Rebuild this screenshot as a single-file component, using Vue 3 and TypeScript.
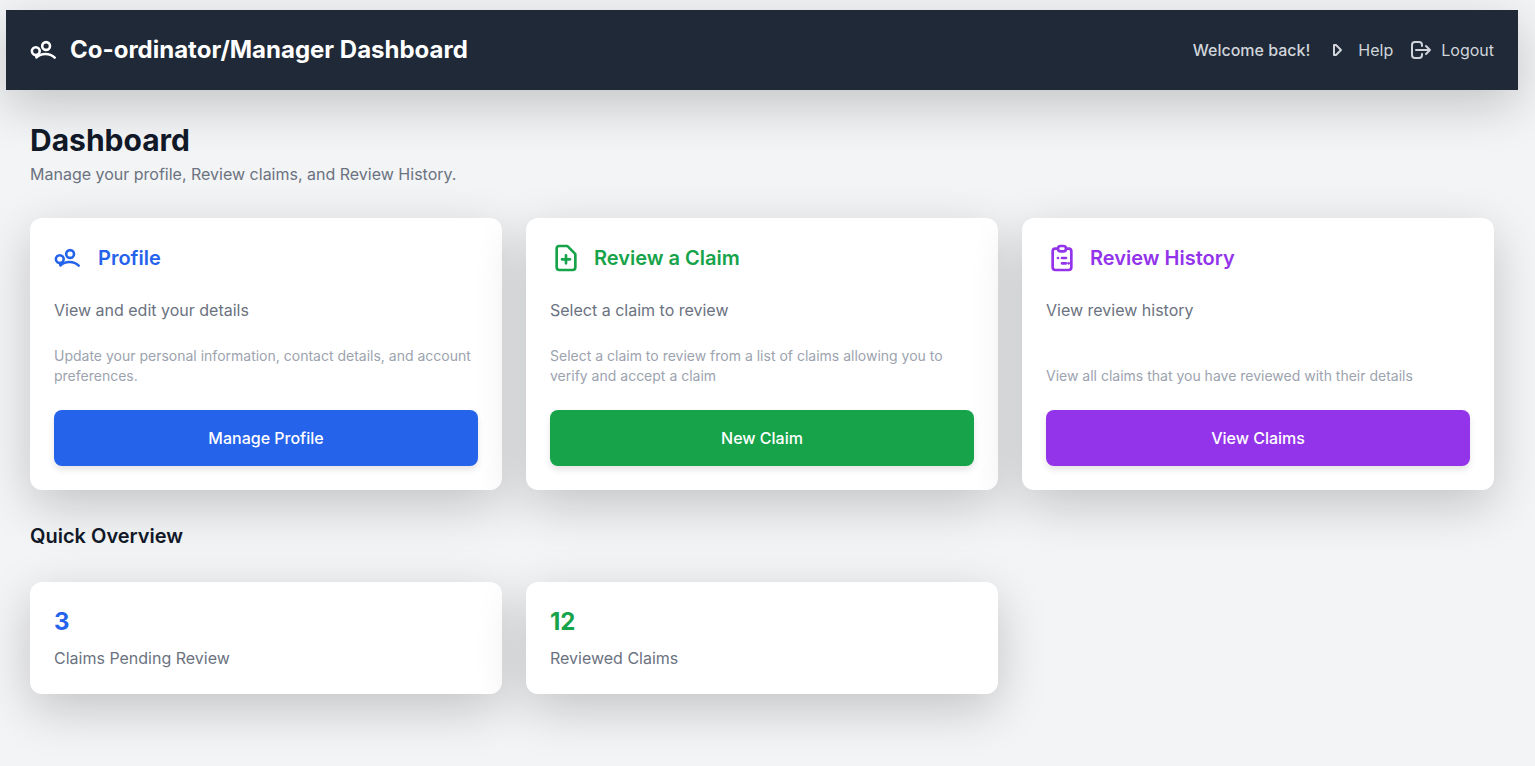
<script setup lang="ts">
interface Card {
  tone: string
  icon: 'people' | 'file' | 'clipboard'
  title: string
  summary: string
  details: string
  action: string
}

interface Stat {
  tone: string
  value: number
  label: string
}

const cards: Card[] = [
  {
    tone: 'blue',
    icon: 'people',
    title: 'Profile',
    summary: 'View and edit your details',
    details: 'Update your personal information, contact details, and account preferences.',
    action: 'Manage Profile',
  },
  {
    tone: 'green',
    icon: 'file',
    title: 'Review a Claim',
    summary: 'Select a claim to review',
    details: 'Select a claim to review from a list of claims allowing you to verify and accept a claim',
    action: 'New Claim',
  },
  {
    tone: 'purple',
    icon: 'clipboard',
    title: 'Review History',
    summary: 'View review history',
    details: 'View all claims that you have reviewed with their details',
    action: 'View Claims',
  },
]

const stats: Stat[] = [
  { tone: 'blue', value: 3, label: 'Claims Pending Review' },
  { tone: 'green', value: 12, label: 'Reviewed Claims' },
]
</script>

<template>
  <div class="page">
    <header class="topbar">
      <div class="brand">
        <svg class="icon people" viewBox="0 0 32 32" aria-hidden="true">
          <circle cx="16.1" cy="12" r="3.9" />
          <circle cx="5.8" cy="17.100" r="3.9" />
          <path d="M6.500 23.400C11 18.900 19.500 18.700 24.700 23.600M6.500 23.400L6 21" />
        </svg>
        <h1>Co-ordinator/Manager Dashboard</h1>
      </div>
      <nav class="links">
        <span class="welcome">Welcome back!</span>
        <a href="#help">
          <svg class="icon small" viewBox="0 0 24 24" aria-hidden="true">
            <path d="M8 7h2L15 12l-5 5H8z" />
          </svg>
          Help
        </a>
        <a href="#logout">
          <svg class="icon small" viewBox="0 0 24 24" aria-hidden="true">
            <path d="M17 16l4-4m0 0l-4-4m4 4H7m6 4v1a3 3 0 01-3 3H6a3 3 0 01-3-3V7a3 3 0 013-3h4a3 3 0 013 3v1" />
          </svg>
          Logout
        </a>
      </nav>
    </header>

    <main>
      <h2 class="heading">Dashboard</h2>
      <p class="lead">Manage your profile, Review claims, and Review History.</p>

      <section class="grid">
        <article v-for="card in cards" :key="card.title" class="card" :class="card.tone">
          <div class="card-title">
            <svg v-if="card.icon === 'people'" class="icon people" viewBox="0 0 32 32" aria-hidden="true">
              <circle cx="16.1" cy="12" r="3.9" />
              <circle cx="5.8" cy="17.100" r="3.9" />
              <path d="M6.500 23.400C11 18.900 19.500 18.700 24.700 23.600M6.500 23.400L6 21" />
            </svg>
            <svg v-else-if="card.icon === 'file'" class="icon" viewBox="0 0 24 24" aria-hidden="true">
              <path d="M9 13h6m-3-3v6m5 5H7a2 2 0 01-2-2V5a2 2 0 012-2h5.586a1 1 0 01.707.293l5.414 5.414a1 1 0 01.293.707V19a2 2 0 01-2 2z" />
            </svg>
            <svg v-else class="icon" viewBox="0 0 24 24" aria-hidden="true">
              <path d="M9 5H7a2 2 0 00-2 2v12a2 2 0 002 2h10a2 2 0 002-2V7a2 2 0 00-2-2h-2M9 5a2 2 0 002 2h2a2 2 0 002-2M9 5a2 2 0 012-2h2a2 2 0 012 2M9 12h.01M12 12h3M12 16h3M17 16h.01" />
            </svg>
            <h3>{{ card.title }}</h3>
          </div>
          <p class="summary">{{ card.summary }}</p>
          <p class="details">{{ card.details }}</p>
          <button type="button">{{ card.action }}</button>
        </article>
      </section>

      <h3 class="subheading">Quick Overview</h3>
      <section class="grid">
        <article v-for="stat in stats" :key="stat.label" class="card stat" :class="stat.tone">
          <p class="value">{{ stat.value }}</p>
          <p class="label">{{ stat.label }}</p>
        </article>
      </section>
    </main>
  </div>
</template>

<style>
body {
  margin: 0;
  background: #f3f4f6;
}
</style>

<style scoped>
.page {
  box-sizing: border-box;
  min-height: 100vh;
  padding: 10px 17px 0 6px;
  color: #111827;
  font-family: Inter, "Liberation Sans", sans-serif;
  font-size: 16px;
  line-height: 24px;
}

h1,
h2,
h3,
p {
  margin: 0;
}

.topbar {
  display: flex;
  align-items: center;
  justify-content: space-between;
  padding: 24px;
  background: #1f2937;
  color: #fff;
  box-shadow: 0 15px 50px rgba(0, 0, 0, 0.2);
}

.brand,
.links,
.links a {
  display: flex;
  align-items: center;
  gap: 8px;
}

.brand h1 {
  font-size: 24px;
  font-weight: 700;
  line-height: 32px;
}

.links {
  gap: 16px;
  color: #d1d5db;
}

.links a {
  color: inherit;
  text-decoration: none;
}

.welcome {
  font-weight: 500;
}

.icon {
  flex: none;
  width: 32px;
  height: 32px;
  fill: none;
  stroke: currentColor;
  stroke-width: 2;
  stroke-linecap: round;
  stroke-linejoin: round;
}

.icon.people {
  stroke-width: 2.6;
}

.icon.small {
  width: 24px;
  height: 24px;
}

main {
  padding: 32px 24px;
}

.heading {
  font-size: 30px;
  font-weight: 700;
  line-height: 36px;
}

.lead {
  margin-top: 4px;
  color: #6b7280;
}

.grid {
  display: grid;
  grid-template-columns: repeat(3, 1fr);
  gap: 24px;
  margin-top: 32px;
}

.card {
  display: flex;
  flex-direction: column;
  gap: 24px;
  padding: 24px;
  border-radius: 12px;
  background: #fff;
  box-shadow: 0 15px 50px rgba(0, 0, 0, 0.2);
}

.blue {
  --tone: #2563eb;
}

.green {
  --tone: #16a34a;
}

.purple {
  --tone: #9333ea;
}

.card-title {
  display: flex;
  align-items: center;
  gap: 12px;
  color: var(--tone);
}

.card-title h3,
.subheading {
  font-size: 20px;
  font-weight: 600;
  line-height: 28px;
}

.summary,
.label {
  color: #6b7280;
}

.details {
  margin-top: auto;
  color: #9ca3af;
  font-size: 14px;
  line-height: 20px;
}

.card button {
  padding: 16px;
  border: 0;
  border-radius: 8px;
  background: var(--tone);
  box-shadow: 0 4px 6px rgba(0, 0, 0, 0.1);
  color: #fff;
  font: inherit;
  font-weight: 500;
  cursor: pointer;
}

.subheading {
  margin-top: 32px;
}

.stat {
  gap: 8px;
}

.value {
  color: var(--tone);
  font-size: 24px;
  font-weight: 700;
  line-height: 32px;
}
</style>
